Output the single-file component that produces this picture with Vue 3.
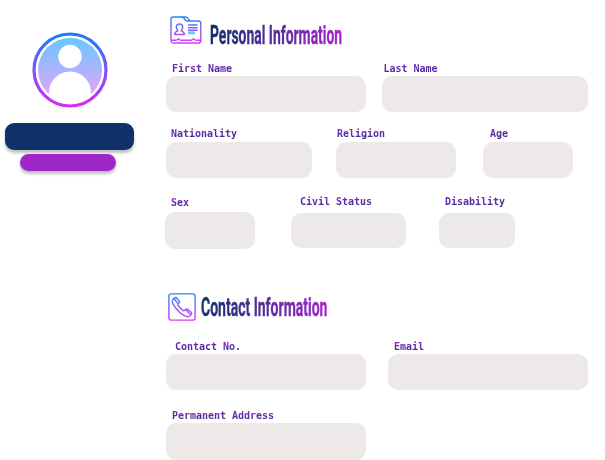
<script setup>
const personalRows = [
  [
    { label: 'First Name', cls: 'first-name' },
    { label: 'Last Name', cls: 'last-name' },
  ],
  [
    { label: 'Nationality', cls: 'nationality' },
    { label: 'Religion', cls: 'religion' },
    { label: 'Age', cls: 'age' },
  ],
  [
    { label: 'Sex', cls: 'sex' },
    { label: 'Civil Status', cls: 'civil-status' },
    { label: 'Disability', cls: 'disability' },
  ],
]
const contactRows = [
  [
    { label: 'Contact No.', cls: 'contact-no' },
    { label: 'Email', cls: 'email' },
  ],
  [{ label: 'Permanent Address', cls: 'address' }],
]
</script>

<template>
  <div class="page">
    <aside class="profile">
      <svg class="avatar" width="76" height="76" viewBox="0 0 76 76">
        <defs>
          <linearGradient id="ring" x1="0" y1="0" x2="0" y2="1">
            <stop offset="0" stop-color="#1b7cf8" />
            <stop offset="1" stop-color="#d92bf5" />
          </linearGradient>
          <linearGradient id="sky" x1="0" y1="0" x2="0" y2="1">
            <stop offset="0" stop-color="#68c7ff" />
            <stop offset="1" stop-color="#f0a0fb" />
          </linearGradient>
          <clipPath id="face"><circle cx="38" cy="38" r="32.5" /></clipPath>
        </defs>
        <circle cx="38" cy="38" r="36" fill="#fff" stroke="url(#ring)" stroke-width="3.2" />
        <circle cx="38" cy="38" r="32" fill="url(#sky)" />
        <g clip-path="url(#face)" fill="#fff">
          <circle cx="38" cy="24.5" r="11.7" />
          <path d="M17 76V60.500A21 21 0 0 1 59 60.500V76Z" />
        </g>
      </svg>
      <div class="name-bar"></div>
      <div class="role-bar"></div>
    </aside>

    <main class="details">
      <section class="personal">
        <header>
          <svg class="folder" width="32" height="28" viewBox="0 0 32 28" fill="none">
            <defs>
              <linearGradient id="line" gradientUnits="userSpaceOnUse" x1="0" y1="0" x2="0" y2="28">
                <stop offset="0" stop-color="#2388f7" />
                <stop offset="1" stop-color="#e236f5" />
              </linearGradient>
            </defs>
            <g stroke="url(#line)" stroke-width="1.4" stroke-linejoin="round">
              <path d="M1 24.500V3Q1 1 3 1H11.500Q13 1 14 2.300L15.500 4.300Q16.200 5 17.200 5H28.500Q30.800 5 30.800 7.200V24.500Q30.800 27 28.500 27H3.500Q1 27 1 24.500Z" />
              <path d="M1.200 24.300H5.800Q7.500 24.300 8.500 22.500Q9.500 24.300 11 24.300H21Q22.500 24.300 23.500 22.500Q24.500 24.300 26.200 24.300H30.600" />
              <path d="M11.500 1H15.500Q17 1 17.800 2.200L19.500 4.600" />
              <path d="M4.700 18.500Q4.800 15.600 8 14.900Q6.300 13.300 6.300 11.100Q6.500 8 9.500 8Q12.600 8 12.700 11.100Q12.700 13.300 11.100 14.900Q14.200 15.600 14.400 18.500Z" />
              <path d="M18 9H27.500M18 11.700H27.500M18 14.200H27.500" />
            </g>
            <path d="M18 15.400H25V18.300H18Z" fill="#7cc0ff" />
          </svg>
          <h2 class="title"><span>Personal Information</span></h2>
        </header>
        <div v-for="(row, i) in personalRows" :key="i" class="row" :class="'p' + (i + 1)">
          <div v-for="f in row" :key="f.cls" class="field" :class="f.cls">
            <label><span>{{ f.label }}</span></label>
            <div class="box"></div>
          </div>
        </div>
      </section>

      <section class="contact">
        <header>
          <svg class="phone" width="28" height="28" viewBox="0 0 28 28" fill="none" stroke="url(#line)" stroke-width="1.4" stroke-linejoin="round">
            <rect x=".9" y=".9" width="26.200" height="26.200" rx="2" />
            <path d="M6.100 5.200L4.800 6.600Q3.200 9.200 7.200 14.500Q11.600 20.200 16.200 22.700Q19.800 24.600 21.700 23L23.400 21.300Q24.200 20.200 23.200 19.200L19.500 16.400Q18.400 15.700 17.500 16.600L16.400 17.700Q15.600 18 14.500 17.100Q11.500 14.700 9.900 12.200Q9.500 11.300 10.100 10.800L11.100 9.900Q11.900 9 11.200 7.900L8.700 5Q7.500 3.800 6.100 5.200Z" />
            <path d="M6.200 5.800L10 10.600M18 17L22.500 21.500" />
          </svg>
          <h2 class="title"><span>Contact Information</span></h2>
        </header>
        <div v-for="(row, i) in contactRows" :key="i" class="row" :class="'c' + (i + 1)">
          <div v-for="f in row" :key="f.cls" class="field" :class="f.cls">
            <label><span>{{ f.label }}</span></label>
            <div class="box"></div>
          </div>
        </div>
      </section>
    </main>
  </div>
</template>

<style>
body {
  background: #fff;
}
</style>

<style scoped>
.page {
  display: flex;
  width: 605px;
  height: 460px;
  overflow: hidden;
  background: #fff;
}
.profile {
  width: 165px;
  flex: none;
  padding: 32px 0 0 5px;
  box-sizing: border-box;
}
.avatar {
  display: block;
  margin-left: 27.3px;
}
.name-bar {
  width: 129px;
  height: 27px;
  margin-top: 15px;
  border-radius: 9px;
  background: #0f326b;
  box-shadow: 0 3px 3px rgba(0, 0, 0, 0.25);
}
.role-bar {
  width: 96px;
  height: 16.500px;
  margin: 4px 0 0 15.300px;
  border-radius: 9px;
  background: #9f27c9;
  box-shadow: 0 3px 3px rgba(0, 0, 0, 0.25);
}
.details {
  flex: 1;
}
header,
.row {
  display: flex;
}
header svg {
  display: block;
  flex: none;
}
.title {
  width: 135px;
  margin: 0;
  font: 700 25px/28px Roboto, sans-serif;
  white-space: nowrap;
}
.title span {
  display: inline-block;
  color: transparent;
  background: linear-gradient(90deg, #0f326b, #a424cb);
  background-clip: text;
  -webkit-background-clip: text;
  -webkit-text-stroke: 0.4px transparent;
  transform: scaleX(0.556);
  transform-origin: 0 50%;
}
.personal header {
  height: 44px;
  padding: 16px 0 0 5px;
}
.personal .title {
  margin: 6px 0 0 7.500px;
}
.contact header {
  height: 45px;
  padding: 44px 0 0 3px;
}
.contact .title {
  margin: 1px 0 0 5px;
}
.contact .title span {
  transform: scaleX(0.56);
}
.field {
  flex: none;
}
label {
  display: block;
  height: 16px;
  line-height: 17px;
  padding-left: 6px;
  font-family: 'DejaVu Sans Mono', monospace;
  font-weight: 700;
  font-size: 10px;
  letter-spacing: -0.02px;
  white-space: nowrap;
}
label span {
  color: transparent;
  background: linear-gradient(180deg, #8426b8 15%, #35308c 90%);
  background-clip: text;
  -webkit-background-clip: text;
}
.box {
  height: 36px;
  border-radius: 10px;
  background: #ece9e8;
}
.row {
  padding-left: 1px;
}
.p2 {
  margin-top: 13.500px;
}
.p3 {
  margin-top: 16px;
  padding-left: 0;
}
.c2 {
  margin-top: 17.500px;
}
.p2 label,
.p3 label {
  line-height: 15px;
}
.p2 .box,
.sex .box,
.address .box {
  height: 36.500px;
}
.first-name,
.contact-no,
.address {
  width: 200px;
}
.last-name {
  width: 206px;
  margin-left: 16px;
}
.last-name label {
  padding-left: 1.500px;
}
.nationality {
  width: 146px;
}
.nationality label {
  padding-left: 5px;
}
.religion {
  width: 120.500px;
  margin-left: 23.500px;
}
.religion label {
  padding-left: 1.500px;
}
.age {
  width: 90px;
  margin-left: 26.500px;
}
.age label {
  padding-left: 7.500px;
}
.sex {
  width: 90px;
  padding-top: 2px;
}
.p3 .sex label {
  line-height: 13px;
}
.civil-status {
  width: 115px;
  margin-left: 35.500px;
}
.civil-status label {
  padding-left: 9.500px;
}
.disability {
  width: 76px;
  margin-left: 33px;
}
.disability label {
  padding-left: 6.500px;
}
.civil-status label,
.disability label {
  height: 19px;
}
.civil-status .box,
.disability .box {
  height: 34.500px;
}
.contact-no label {
  padding-left: 9px;
}
.email {
  width: 200px;
  margin-left: 22px;
}
</style>
